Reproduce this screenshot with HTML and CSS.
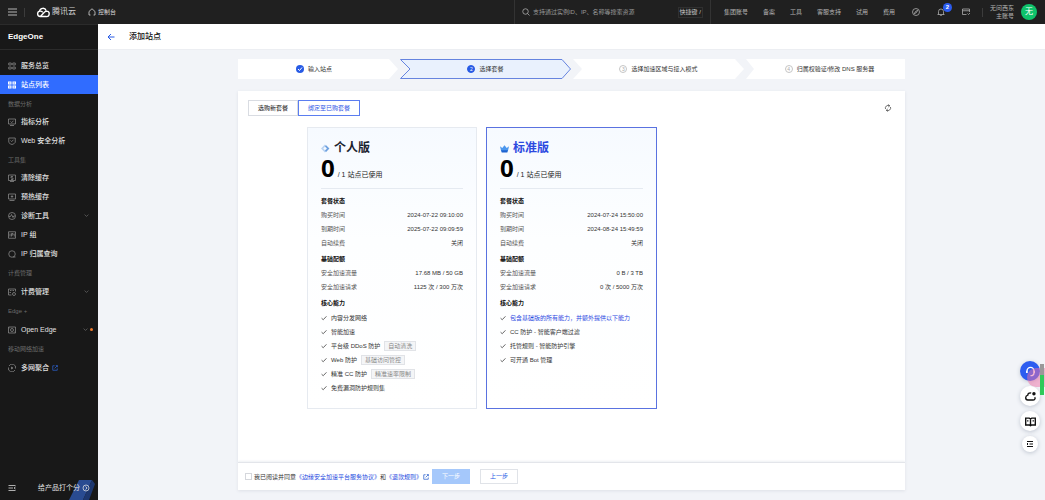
FILE: index.html
```html
<!DOCTYPE html>
<html lang="zh-CN">
<head>
<meta charset="utf-8">
<title>EdgeOne - 添加站点</title>
<link rel="stylesheet" href="styles.css">
</head>
<body>
<svg class="sprite" aria-hidden="true">
  <symbol id="grid" viewBox="0 0 16 16"><path d="M1.500 2h5v4h-5zM9.500 2h5v4h-5zM1.500 10h5v4h-5zM9.500 10h5v4h-5z"/></symbol>
  <symbol id="list" viewBox="0 0 16 16"><path fill="currentColor" stroke="none" d="M0 1h7v6H0zM9 1h7v6H9zM0 9h7v6H0zM9 9h7v6H9z"/><path stroke="#306cff" d="M2 4h3M11 4h3M2 12h3M11 12h3"/></symbol>
  <symbol id="chart" viewBox="0 0 16 16"><path d="M1 2h14v10H1zM4 15h8M5 7l2 2 4-3"/></symbol>
  <symbol id="shield" viewBox="0 0 16 16"><path d="M1.500 2h13v8c0 2-3 4-6.500 5-3.500-1-6.500-3-6.500-5zM5 7l2 2 4-3"/></symbol>
  <symbol id="clean" viewBox="0 0 16 16"><path d="M1 2h14v11H1zM4 15h8M10 5H6v3h4v3H6"/></symbol>
  <symbol id="warm" viewBox="0 0 16 16"><path d="M1 2h14v10H1zM3 15h10M8 4.500v5M5.500 7h5"/></symbol>
  <symbol id="pulse" viewBox="0 0 16 16"><circle cx="8" cy="8" r="7"/><path d="M2 9h3l2-4 3 6 1.500-3H14"/></symbol>
  <symbol id="ip" viewBox="0 0 16 16"><path d="M1 1.500h14v13H1zM4 5v6M7 11V5h3v3H7M12.500 5v6"/></symbol>
  <symbol id="find" viewBox="0 0 16 16"><circle cx="8" cy="8" r="6.500"/><path d="M10 14h5"/></symbol>
  <symbol id="bill" viewBox="0 0 16 16"><path d="M7 14H1V2h14v5M4 5h3M9 5h3M3 9h3"/><circle cx="12" cy="12" r="3"/></symbol>
  <symbol id="edge" viewBox="0 0 16 16"><path d="M1 2h14v12H1z"/><circle cx="8" cy="8" r="3"/><path d="M3 4h1M12 12h1"/></symbol>
  <symbol id="multi" viewBox="0 0 16 16"><path d="M2 4a7 7 0 0 1 13 5M14 12A7 7 0 0 1 1 7M7 6l3 2-3 2z"/></symbol>
  <symbol id="down" viewBox="0 0 16 16"><path d="M2 5l6 6 6-6"/></symbol>
  <symbol id="tick" viewBox="0 0 16 16"><path d="M1.500 8.500l4.500 4 8.500-9"/></symbol>
  <symbol id="out" viewBox="0 0 16 16"><path d="M7 2H2v12h12V9M10 1.500h4.500V6M14 2L7 9"/></symbol>
</svg>

<header class="topbar">
  <button class="plain menu" aria-label="菜单"><svg viewBox="0 0 9 8"><path d="M0 1h9M0 4h9M0 7h9"/></svg></button>
  <span class="rule"></span>
  <a class="brand" href="#"><svg viewBox="0 0 26 20"><path d="M8 17.500h11a5 5 0 0 0 1-10c-2 0-3 .8-4.500 2.200L8 17.500a5 5 0 1 1 0-10c2 0 3.500 1 4.500 2M6.500 7.500a6.500 6.500 0 0 1 12.500-1"/></svg>腾讯云</a>
  <a class="console" href="#"><svg viewBox="0 0 16 16"><path d="M5 14H2V7l6-5.500L14 7v7h-3"/></svg>控制台</a>
  <label class="search">
    <svg viewBox="0 0 16 16"><circle cx="7" cy="7" r="5.500"/><path d="M11 11l4 4"/></svg>
    <input type="text" placeholder="支持通过实例ID、IP、名称等搜索资源" aria-label="搜索">
    <kbd>快捷键 /</kbd>
  </label>
  <nav class="toplinks">
    <a href="#">集团账号</a><a href="#">备案</a><a href="#">工具</a><a href="#">客服支持</a><a href="#">试用</a><a href="#">费用</a>
  </nav>
  <div class="tools">
    <button class="plain" aria-label="探索"><svg viewBox="0 0 16 16"><circle cx="8" cy="8" r="7"/><path d="M11.500 4.500L9 9l-4.500 2.500L7 7z"/></svg></button>
    <button class="plain bell" aria-label="消息"><svg viewBox="0 0 16 16"><path d="M1 13h14M3 13V7a5 5 0 0 1 10 0v6M6 15.500h4"/></svg><span class="badge">2</span></button>
    <button class="plain" aria-label="窗口"><svg viewBox="0 0 16 16"><path d="M9 13H1V2h14v6M1 5.500h14M11 11l2 2 3-3"/></svg></button>
  </div>
  <span class="rule"></span>
  <div class="user"><span>无问西东</span><span>主账号</span></div>
  <span class="avatar">无</span>
</header>

<div class="shell">
  <aside class="sidebar">
    <h1 class="product">EdgeOne</h1>
    <nav class="nav">
      <a class="item" href="#"><svg><use href="#grid"/></svg>服务总览</a>
      <a class="item active" href="#"><svg><use href="#list"/></svg>站点列表</a>
      <h2 class="group">数据分析</h2>
      <a class="item" href="#"><svg><use href="#chart"/></svg>指标分析</a>
      <a class="item" href="#"><svg><use href="#shield"/></svg>Web 安全分析</a>
      <h2 class="group">工具集</h2>
      <a class="item" href="#"><svg><use href="#clean"/></svg>清除缓存</a>
      <a class="item" href="#"><svg><use href="#warm"/></svg>预热缓存</a>
      <a class="item" href="#"><svg><use href="#pulse"/></svg>诊断工具<svg class="caret"><use href="#down"/></svg></a>
      <a class="item" href="#"><svg><use href="#ip"/></svg>IP 组</a>
      <a class="item" href="#"><svg><use href="#find"/></svg>IP 归属查询</a>
      <h2 class="group wide">计费管理</h2>
      <a class="item" href="#"><svg><use href="#bill"/></svg>计费管理<svg class="caret"><use href="#down"/></svg></a>
      <h2 class="group wide">Edge +</h2>
      <a class="item" href="#"><svg><use href="#edge"/></svg>Open Edge<svg class="caret"><use href="#down"/></svg><i class="dot"></i></a>
      <h2 class="group wide">移动网络加速</h2>
      <a class="item" href="#"><svg><use href="#multi"/></svg>多网聚合<svg class="ext"><use href="#out"/></svg></a>
    </nav>
    <div class="rate">
      <svg class="art" viewBox="0 0 30 20"><path fill="#294b91" d="M13 0h13l-9 20H3z"/><path fill="#1d376f" d="M26 0l3 4-6 16h-6z"/></svg>
      <button class="plain" aria-label="收起菜单"><svg viewBox="0 0 16 16"><path d="M1 3h14M1 8h9M1 13h14M15 6l-3 2 3 2"/></svg></button>
      <a href="#">给产品打个分<svg viewBox="0 0 16 16"><circle cx="8" cy="8" r="6"/><path d="M7 5l3 3-3 3"/></svg></a>
    </div>
  </aside>

  <main class="main">
    <div class="pagehead">
      <button class="plain" aria-label="返回"><svg viewBox="0 0 16 16"><path d="M15 8H2M8 2L2 8l6 6"/></svg></button>
      <h2>添加站点</h2>
    </div>
    <div class="content">
      <ol class="steps">
        <li class="first"><svg class="shape" viewBox="0 0 160 20" preserveAspectRatio="none"><path d="M0 0h151l9 10-9 10H0z"/></svg>
          <svg class="mark" viewBox="0 0 16 16"><circle cx="8" cy="8" r="8" fill="#285be5"/><path d="M4 8l3 3 5-6" fill="none" stroke="#fff" stroke-width="2"/></svg><span>输入站点</span></li>
        <li class="current"><svg class="shape" viewBox="0 0 171 20" preserveAspectRatio="none"><path d="M.5 .5H162l8.500 9.500-8.500 9.500H.5L10 10z"/></svg><b>2</b><span>选择套餐</span></li>
        <li><svg class="shape" viewBox="0 0 171 20" preserveAspectRatio="none"><path d="M0 0h162l9 10-9 10H0l9-10z"/></svg><b>3</b><span>选择加速区域与接入模式</span></li>
        <li class="last"><svg class="shape" viewBox="0 0 159 20" preserveAspectRatio="none"><path d="M0 0h159v20H0l8-10z"/></svg><b>4</b><span>归属权验证/修改 DNS 服务器</span></li>
      </ol>
      <section class="panel">
        <div class="panelbar">
          <div class="tabs"><button>选购新套餐</button><button class="on">绑定至已购套餐</button></div>
          <button class="plain refresh" aria-label="刷新"><svg viewBox="0 0 16 16"><path d="M3 10a5.500 5.500 0 0 1 8-6.500M13 6a5.500 5.500 0 0 1-8 6.500M8.500 1l3 2.500-3 2.500M7.500 15l-3-2.500 3-2.500"/></svg></button>
        </div>
        <div class="plans">
          <article class="plan">
            <h3><svg viewBox="0 0 16 16"><path fill="#b9d3f2" d="M7 1l7 7-7 7-7-7z"/><path fill="#6da0df" d="M9 2l6 6-6 6-2-2 4-4-4-4z"/><path fill="#f4f9ff" d="M7 5l3 3-3 3-3-3z"/></svg>个人版</h3>
            <p class="usage"><strong>0</strong>/ 1 站点已使用</p>
            <h4>套餐状态</h4>
            <dl>
              <div><dt>购买时间</dt><dd>2024-07-22 09:10:00</dd></div>
              <div><dt>到期时间</dt><dd>2025-07-22 09:09:59</dd></div>
              <div><dt>自动续费</dt><dd>关闭</dd></div>
            </dl>
            <h4>基础配额</h4>
            <dl>
              <div><dt>安全加速流量</dt><dd>17.68 MB / 50 GB</dd></div>
              <div><dt>安全加速请求</dt><dd>1125 次 / 300 万次</dd></div>
            </dl>
            <h4>核心能力</h4>
            <ul>
              <li><svg><use href="#tick"/></svg>内容分发网络</li>
              <li><svg><use href="#tick"/></svg>智能加速</li>
              <li><svg><use href="#tick"/></svg>平台级 DDoS 防护<em>自动清洗</em></li>
              <li><svg><use href="#tick"/></svg>Web 防护<em>基础访问管控</em></li>
              <li><svg><use href="#tick"/></svg>精准 CC 防护<em>精准速率限制</em></li>
              <li><svg><use href="#tick"/></svg>免费漏洞防护规则集</li>
            </ul>
          </article>
          <article class="plan chosen">
            <h3><svg viewBox="0 0 16 16"><path fill="#4b97ee" d="M0 4l4 3 4-5 4 5 4-3-2 9H2z"/><path fill="#1e63d0" d="M2 11h12l-1 4H3z"/></svg>标准版</h3>
            <p class="usage"><strong>0</strong>/ 1 站点已使用</p>
            <h4>套餐状态</h4>
            <dl>
              <div><dt>购买时间</dt><dd>2024-07-24 15:50:00</dd></div>
              <div><dt>到期时间</dt><dd>2024-08-24 15:49:59</dd></div>
              <div><dt>自动续费</dt><dd>关闭</dd></div>
            </dl>
            <h4>基础配额</h4>
            <dl>
              <div><dt>安全加速流量</dt><dd>0 B / 3 TB</dd></div>
              <div><dt>安全加速请求</dt><dd>0 次 / 5000 万次</dd></div>
            </dl>
            <h4>核心能力</h4>
            <ul>
              <li class="hot"><svg><use href="#tick"/></svg>包含基础版的所有能力，并额外提供以下能力</li>
              <li><svg><use href="#tick"/></svg>CC 防护 - 智能客户端过滤</li>
              <li><svg><use href="#tick"/></svg>托管规则 - 智能防护引擎</li>
              <li><svg><use href="#tick"/></svg>可开通 Bot 管理</li>
            </ul>
          </article>
        </div>
        <footer class="actions">
          <input type="checkbox" id="agree"><label for="agree">我已阅读并同意</label><a href="#">《边缘安全加速平台服务协议》</a><span>和</span><a href="#">《退款规则》</a><svg class="ext"><use href="#out"/></svg>
          <button class="next" disabled>下一步</button>
          <button class="prev">上一步</button>
        </footer>
      </section>
    </div>
  </main>
</div>

<div class="floats">
  <button class="primary" aria-label="客服"><svg viewBox="0 0 16 16"><path d="M3 10V7a5 5 0 0 1 10 0v3M2.500 7v3M13.500 7v3M13 10c0 3-2 4-5 4"/></svg></button>
  <button aria-label="云助手"><svg viewBox="0 0 16 16"><path d="M9 3C6 2 4 4 4 6c-4 1-4 7 0 7h8c3 0 3-3 2-4"/><circle cx="13" cy="4" r="1.500" fill="#111"/></svg></button>
  <button aria-label="文档"><svg viewBox="0 0 16 16"><path d="M8 4v10M1 3h5l2 1 2-1h5v10h-5l-2 1-2-1H1zM3 7h2M11 7h2"/></svg></button>
  <button class="small" aria-label="收起"><svg viewBox="0 0 16 16"><path d="M2 3h12M7 8h7M2 13h12M4 6L2 8l2 2"/></svg></button>
  <span class="glow"></span>
  <span class="meter"></span>
</div>
</body>
</html>
```
FILE: styles.css
```css
* { box-sizing: border-box; }
body, h1, h2, h3, h4, p, ul, ol, dl, dd { margin: 0; padding: 0; }
body {
  min-height: 100vh;
  display: flex;
  flex-direction: column;
  background: #f2f4f8;
  color: #333;
  font: 6px/14px "Liberation Sans", "Noto Sans CJK SC", sans-serif;
}
ul, ol { list-style: none; }
a { color: inherit; text-decoration: none; }
button, input { font: inherit; color: inherit; margin: 0; }
button { cursor: pointer; }
svg { width: 8px; height: 8px; flex: none; fill: none; stroke: currentColor; stroke-width: 1.5; }
.sprite { position: absolute; width: 0; height: 0; }
.plain { display: flex; padding: 0; border: 0; background: none; }

/* Top bar */
.topbar {
  height: 24px;
  display: flex;
  align-items: center;
  padding: 0 8px;
  background: #202020;
  color: #b4b4b4;
}
.menu svg { width: 9px; stroke-width: 1; }
.rule { width: 1px; height: 9px; margin-left: 7px; background: #3c3c3c; }
.brand { display: flex; align-items: center; gap: 2px; margin-left: 11px; font-size: 8px; color: #d0d0d0; }
.brand svg { width: 14px; height: 11px; stroke: #fff; stroke-width: 2.5; }
.console { display: flex; align-items: center; gap: 2px; margin-left: 12px; color: #ddd; }
.search {
  width: 197px;
  height: 24px;
  display: flex;
  align-items: center;
  gap: 3px;
  margin-left: auto;
  padding: 0 7px;
  border: solid #333;
  border-width: 0 1px;
}
.search input { flex: 1; min-width: 0; padding: 0; border: 0; outline: 0; background: none; }
.search input::placeholder { color: #999; opacity: 1; }
.search kbd { padding: 0 1px; border: 1px solid #303030; font: inherit; line-height: 9px; color: #ccc; }
.toplinks { display: flex; gap: 15px; margin-left: 13px; }
.tools { display: flex; gap: 17px; margin: 0 5px 0 17px; }
.bell { position: relative; }
.badge {
  position: absolute;
  left: 6px;
  top: -5px;
  width: 9px;
  height: 9px;
  border-radius: 50%;
  background: #2b5bf0;
  color: #fff;
  font-weight: bold;
  line-height: 9px;
  text-align: center;
}
.user { display: flex; flex-direction: column; margin-left: 7px; line-height: 8px; text-align: right; }
.avatar {
  width: 16px;
  height: 16px;
  margin-left: 7px;
  border-radius: 50%;
  background: #0fc26b;
  color: #fff;
  font-size: 8px;
  line-height: 16px;
  text-align: center;
}

/* Sidebar */
.shell { flex: 1; display: flex; }
.sidebar { width: 98px; flex: none; display: flex; flex-direction: column; background: #181818; color: #e2e2e2; }
.product { height: 26px; padding-left: 8px; border: solid #2b2b2b; border-width: 1px 0; font-size: 8px; line-height: 24px; color: #fff; }
.nav { padding-top: 6px; }
.item { height: 19px; display: flex; align-items: center; padding-left: 8px; font-size: 7px; font-weight: 500; }
.item > svg:first-child { margin-right: 5px; color: #8c8c8c; }
.item.active { background: #306cff; color: #fff; }
.item.active > svg:first-child { color: #fff; }
.group { height: 18px; padding: 3px 0 0 8px; font-size: 6px; font-weight: normal; color: #6c6c6c; }
.group.wide { height: 19px; }
.caret { width: 5px; height: 5px; margin: 0 9px 0 auto; color: #999; }
.ext { width: 6px; height: 6px; margin-left: 3px; color: #2c62ce; stroke-width: 2; }
.dot { width: 3px; height: 3px; margin: 0 5px 0 -7px; border-radius: 50%; background: #f07a2c; }
.rate {
  position: relative;
  height: 24px;
  display: flex;
  align-items: center;
  justify-content: space-between;
  margin-top: auto;
  padding: 0 8px;
  font-size: 7px;
}
.art { position: absolute; right: 2px; bottom: 0; width: 30px; height: 20px; stroke: none; }
.rate a { position: relative; display: flex; align-items: center; gap: 2px; }

/* Page */
.main { flex: 1; min-width: 0; display: flex; flex-direction: column; }
.pagehead { height: 26px; display: flex; align-items: center; gap: 14px; padding-left: 9px; background: #fff; border-bottom: 1px solid #eceef2; }
.pagehead svg { stroke-width: 2; }
.pagehead button { color: #285be5; }
.pagehead h2 { font-size: 8px; font-weight: 500; color: #111; }
.content { flex: 1; display: flex; flex-direction: column; width: 100%; max-width: 687px; margin: 0 auto; padding: 9px 10px 10px; }

.steps { display: grid; grid-template-columns: 160fr 171fr 171fr 159fr; gap: 2px; }
.steps li { position: relative; height: 20px; display: flex; align-items: center; justify-content: center; gap: 4px; }
.steps .first { padding-right: 8px; }
.steps .last { padding-left: 8px; }
.shape { position: absolute; inset: 0; width: 100%; height: 100%; fill: #fff; stroke: none; }
.current .shape { fill: #e9f1fd; stroke: #6684df; stroke-width: 1; }
.mark { position: relative; stroke: none; }
.steps span { position: relative; }
.steps b { position: relative; width: 8px; height: 8px; border: 1px solid #c5c5c5; border-radius: 50%; color: #aaa; font-size: 5px; font-weight: normal; line-height: 6px; text-align: center; }
.steps .current b { background: #285be5; border-color: #285be5; color: #fff; }

.panel { flex: 1; display: flex; flex-direction: column; margin-top: 12px; background: #fff; box-shadow: 0 1px 3px #dde0e6; }
.panelbar { display: flex; align-items: center; justify-content: space-between; padding: 9px 13px 0 10px; }
.tabs { display: flex; }
.tabs button { height: 16px; padding: 0 9px; border: 1px solid #d9dce2; background: #fff; line-height: 14px; color: #111; }
.tabs .on { border-color: #5b7df0; color: #2f56e6; }
.refresh svg { color: #444; }

.plans { display: flex; gap: 9px; padding: 11px 10px 11px 69px; }
.plan { width: 170px; padding: 11px 13px 13px; border: 1px solid #e6eaf0; background: linear-gradient(#f6faff, #fdfeff 40%, #fff); }
.plan.chosen { width: 171px; border-color: #5a72e0; }
.plan h3 { display: flex; align-items: center; gap: 4px; font-size: 12px; font-weight: bold; line-height: 18px; color: #1b2430; }
.plan h3 svg { width: 9px; height: 9px; stroke: none; }
.plan.chosen h3 { color: #2c49df; }
.usage { height: 32px; display: flex; align-items: baseline; gap: 3px; margin-bottom: 5px; border-bottom: 1px solid #e5eaf1; font-size: 7px; line-height: 24px; color: #222; }
.usage strong { font: bold 24px/22px "Noto Sans", sans-serif; color: #000; }
.plan h4 { font-size: 6px; color: #111; }
.plan dl { margin-bottom: 2px; }
.plan dl div { display: flex; justify-content: space-between; }
.plan dt { color: #555; }
.plan ul { padding-top: 1px; }
.plan li { height: 14px; display: flex; align-items: center; gap: 4px; }
.plan li svg { width: 6px; height: 6px; stroke-width: 2; }
.plan em { height: 10px; padding: 0 3px; border: 1px solid #e1e3e7; background: #f4f5f7; color: #888; font-style: normal; line-height: 8px; }
.plan .hot { color: #2c49df; }
.hot svg { color: #333; }

.actions { height: 28px; display: flex; align-items: center; margin-top: auto; padding: 0 7px; border-top: 1px solid #e3e5ea; box-shadow: 0 -1px 2px #eef0f3; }
.actions input { appearance: none; width: 7px; height: 7px; margin-right: 2px; border: 1px solid #d5d7dc; background: #fff; }
.actions a { color: #2248e0; }
.actions .ext { margin-left: 1px; }
.actions button { height: 15px; padding: 0 9px; border: 1px solid #e0e3e8; background: #fff; color: #285be5; line-height: 13px; }
.actions .next { margin: 0 10px 0 3px; border-color: #a5c8fb; background: #a5c8fb; color: #fff; }

/* Floating buttons */
.floats { position: fixed; right: 5px; top: 361px; width: 20px; display: flex; flex-direction: column; align-items: center; gap: 5px; }
.floats button { width: 20px; height: 20px; display: grid; place-items: center; padding: 0; border: 0; border-radius: 50%; background: #fff; color: #111; box-shadow: 0 1px 4px #bfc5d0; }
.floats svg { width: 11px; height: 11px; stroke-width: 2; }
.floats .primary { background: #2c5cf0; color: #fff; }
.floats .small { width: 16px; height: 16px; }
.floats .small svg { width: 8px; height: 8px; }
.glow { position: absolute; left: 7px; top: 7px; width: 18px; height: 19px; border-radius: 50% 0 0 50%; background: #ee6fa6; opacity: 0.5; }
.meter { position: absolute; right: -4px; top: 3px; width: 4px; height: 31px; background: linear-gradient(#999 35%, #2fca5a 35%); }
```
